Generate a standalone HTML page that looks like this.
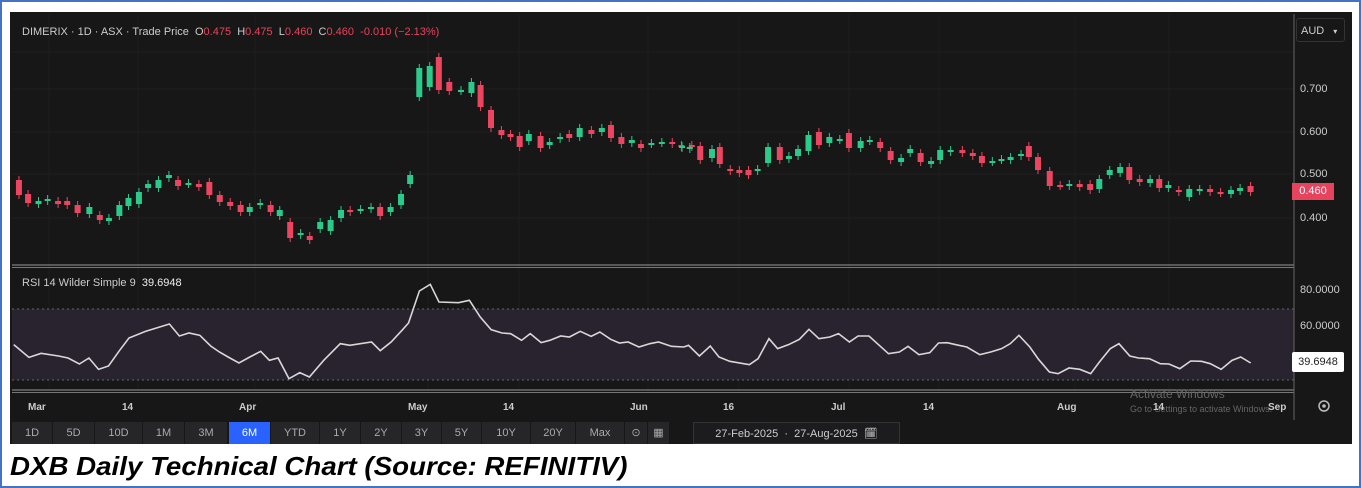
<!DOCTYPE html>
<html><head><meta charset="utf-8"><style>
body{margin:0;background:#fff;}
#w{position:relative;width:1357px;height:484px;border:2px solid #4472c4;overflow:hidden;font-family:"Liberation Sans",sans-serif;}
#c{position:absolute;left:8px;top:10px;width:1342px;height:432px;background:#171717;}
.t{position:absolute;white-space:nowrap;}
.btn{position:absolute;top:410px;height:22px;line-height:22px;text-align:center;font-size:11px;color:#aaa;background:#262629;border-right:1px solid #171717;box-sizing:border-box;}
#cap{position:absolute;left:8px;top:449px;font-weight:bold;font-style:italic;font-size:26px;color:#000;transform:scaleX(1.065);transform-origin:left top;white-space:nowrap;}
</style></head><body>
<div id="w">
<div id="c">
<svg id="s" width="1342" height="432" style="position:absolute;left:0;top:0"></svg>
<div class="t" style="left:12px;top:14px;font-size:11px;color:#ccc">DIMERIX · 1D · ASX · Trade Price &nbsp;O<span style="color:#e8435c">0.475</span> &nbsp;H<span style="color:#e8435c">0.475</span> &nbsp;L<span style="color:#e8435c">0.460</span> &nbsp;C<span style="color:#e8435c">0.460</span> &nbsp;<span style="color:#e8435c">-0.010 (−2.13%)</span></div>
<div class="t" style="left:1286px;top:6px;width:49px;height:24px;border:1px solid #333;border-radius:3px;font-size:11px;color:#ccc;line-height:24px;padding-left:4px;box-sizing:border-box">AUD <span style="font-size:8px;margin-left:6px">▾</span></div>
<div class="t" style="left:1290px;top:71px;font-size:11px;color:#ccc">0.700</div>
<div class="t" style="left:1290px;top:114px;font-size:11px;color:#ccc">0.600</div>
<div class="t" style="left:1290px;top:156px;font-size:11px;color:#ccc">0.500</div>
<div class="t" style="left:1290px;top:200px;font-size:11px;color:#ccc">0.400</div>
<div class="t" style="left:1282px;top:171px;width:42px;height:17px;background:#e8435c;color:#fff;font-size:11px;line-height:17px;text-align:center">0.460</div>
<div class="t" style="left:12px;top:265px;font-size:11px;color:#ccc">RSI 14 Wilder Simple 9 &nbsp;<span style="color:#eee">39.6948</span></div>
<div class="t" style="left:1290px;top:272px;font-size:11px;color:#ccc">80.0000</div>
<div class="t" style="left:1290px;top:308px;font-size:11px;color:#ccc">60.0000</div>
<div class="t" style="left:1282px;top:340px;width:52px;height:20px;background:#fff;color:#222;font-size:11px;line-height:20px;text-align:center;border-radius:2px">39.6948</div>
<div class="t" style="left:1120px;top:375px;font-size:12px;color:#666">Activate Windows</div>
<div class="t" style="left:1120px;top:392px;font-size:9px;color:#666">Go to Settings to activate Windows.</div>
<div class="t" style="left:18px;top:390px;font-size:10px;color:#ccc;font-weight:bold">Mar</div>
<div class="t" style="left:112px;top:390px;font-size:10px;color:#ccc;font-weight:bold">14</div>
<div class="t" style="left:229px;top:390px;font-size:10px;color:#ccc;font-weight:bold">Apr</div>
<div class="t" style="left:398px;top:390px;font-size:10px;color:#ccc;font-weight:bold">May</div>
<div class="t" style="left:493px;top:390px;font-size:10px;color:#ccc;font-weight:bold">14</div>
<div class="t" style="left:620px;top:390px;font-size:10px;color:#ccc;font-weight:bold">Jun</div>
<div class="t" style="left:713px;top:390px;font-size:10px;color:#ccc;font-weight:bold">16</div>
<div class="t" style="left:821px;top:390px;font-size:10px;color:#ccc;font-weight:bold">Jul</div>
<div class="t" style="left:913px;top:390px;font-size:10px;color:#ccc;font-weight:bold">14</div>
<div class="t" style="left:1047px;top:390px;font-size:10px;color:#ccc;font-weight:bold">Aug</div>
<div class="t" style="left:1143px;top:390px;font-size:10px;color:#ccc;font-weight:bold">14</div>
<div class="t" style="left:1258px;top:390px;font-size:10px;color:#ccc;font-weight:bold">Sep</div>
<div class="btn" style="left:2px;width:41px">1D</div>
<div class="btn" style="left:43px;width:42px">5D</div>
<div class="btn" style="left:85px;width:48px">10D</div>
<div class="btn" style="left:133px;width:42px">1M</div>
<div class="btn" style="left:175px;width:43px">3M</div>
<div class="btn" style="left:219px;width:42px;background:#2962ff;color:#fff">6M</div>
<div class="btn" style="left:261px;width:49px">YTD</div>
<div class="btn" style="left:310px;width:41px">1Y</div>
<div class="btn" style="left:351px;width:41px">2Y</div>
<div class="btn" style="left:392px;width:40px">3Y</div>
<div class="btn" style="left:432px;width:40px">5Y</div>
<div class="btn" style="left:472px;width:49px">10Y</div>
<div class="btn" style="left:521px;width:45px">20Y</div>
<div class="btn" style="left:566px;width:49px">Max</div>
<div class="btn" style="left:615px;width:23px">⊙</div>
<div class="btn" style="left:638px;width:22px">▦</div>
<div class="btn" style="left:683px;width:207px;background:#1c1c1e;border:1px solid #333;color:#ccc">27-Feb-2025 &nbsp;·&nbsp; 27-Aug-2025 &nbsp;🗓</div>
</div>
<div id="cap">DXB Daily Technical Chart (Source: REFINITIV)</div>
</div>
<script>
var s=document.getElementById('s'),ox=8,oy=10,h='';
function L(x1,y1,x2,y2,c,w,d){h+='<line x1="'+(x1-ox)+'" y1="'+(y1-oy)+'" x2="'+(x2-ox)+'" y2="'+(y2-oy)+'" stroke="'+c+'" stroke-width="'+w+'"'+(d?' stroke-dasharray="2,3"':'')+'/>';}
[87,130,172,216,50].forEach(function(y){L(10,y,1292,y,'#1f1f1f',1)});
[37,126,243,416,507,636,727,837,927,1063,1157].forEach(function(x){L(x+10,12,x+10,388,'#1e1e1e',1)});
h+='<rect x="2" y="'+(307-oy)+'" width="'+(1292-10)+'" height="71" fill="#29232f"/>';
L(10,307,1292,307,'#666',1,1);L(10,378,1292,378,'#666',1,1);
L(10,263,1292,263,'#999',1);L(10,265.5,1292,265.5,'#777',1);
L(10,388,1292,388,'#999',1);L(10,390.5,1292,390.5,'#777',1);
L(1292,12,1292,418,'#666',1);
var C=[[13,178,193,'r'],[20,192,201,'r'],[28,199,202,'g'],[35,197,199,'g'],[43,199,202,'r'],[50,199,203,'r'],[58,203,211,'r'],[67,205,212,'g'],[75,213,218,'r'],[82,216,219,'g'],[90,203,214,'g'],[97,196,204,'g'],[105,190,202,'g'],[112,182,186,'g'],[120,178,186,'g'],[128,173,176,'g'],[135,178,184,'r'],[143,181,182,'g'],[151,182,185,'r'],[159,180,193,'r'],[167,193,200,'r'],[175,200,204,'r'],[183,203,210,'r'],[190,205,210,'g'],[198,201,203,'g'],[206,203,210,'r'],[213,208,214,'g'],[221,220,236,'r'],[229,231,233,'g'],[236,234,238,'r'],[244,220,227,'g'],[252,218,229,'g'],[260,208,216,'g'],[267,208,210,'r'],[275,207,208,'g'],[283,205,207,'g'],[290,205,214,'r'],[298,205,210,'g'],[306,192,203,'g'],[313,173,182,'g'],[320,66,95,'g'],[328,64,85,'g'],[335,55,88,'r'],[343,80,89,'r'],[352,88,89,'g'],[360,80,91,'g'],[367,83,105,'r'],[375,108,126,'r'],[383,128,133,'r'],[390,132,135,'r'],[397,134,145,'r'],[404,132,139,'g'],[413,134,146,'r'],[420,140,143,'g'],[428,135,137,'g'],[435,132,136,'r'],[443,126,135,'g'],[452,128,132,'r'],[460,126,130,'g'],[467,123,136,'r'],[475,135,142,'r'],[483,138,141,'g'],[490,142,146,'r'],[498,141,142,'g'],[506,140,141,'g'],[514,140,142,'r'],[521,143,145,'r'],[529,143,145,'r'],
[680,144,146,'g'],[686,145,147,'g'],[694,144,158,'r'],[703,147,156,'g'],[709,145,162,'r'],[717,167,169,'r'],[724,168,171,'r'],[731,168,173,'r'],[738,167,169,'g'],[746,145,161,'g'],[755,145,158,'r'],[762,154,157,'g'],[769,147,154,'g'],[777,133,149,'g'],[785,130,143,'r'],[793,135,141,'g'],[801,137,138,'g'],[808,131,146,'r'],[817,139,146,'g'],[824,138,139,'g'],[832,140,146,'r'],[840,149,158,'r'],[848,156,160,'g'],[855,147,151,'g'],[863,151,160,'r'],[871,159,162,'g'],[878,148,158,'g'],[886,148,150,'g'],[895,148,151,'r'],[903,151,154,'r'],[910,154,161,'r'],[918,159,160,'g'],[925,157,158,'g'],[932,155,158,'g'],[940,152,154,'g'],[946,144,155,'r'],[953,155,168,'r'],[962,169,184,'r'],[970,183,184,'r'],[977,182,184,'g'],[985,182,185,'r'],[993,182,188,'r'],[1000,177,187,'g'],[1008,168,173,'g'],[1016,165,171,'g'],[1023,165,178,'r'],[1031,177,180,'r'],[1039,177,181,'g'],[1046,177,186,'r'],[1053,183,186,'g'],[1061,188,190,'r'],[1069,187,195,'g'],[1077,187,189,'g'],[1085,187,190,'r'],[1093,190,191,'r'],[1101,188,192,'g'],[1108,186,189,'g'],[1116,184,190,'r']];
C.forEach(function(c){var x=c[0]<600?c[0]*1.304:680+(c[0]-680)*1.304;var col=c[3]=='g'?'#2bc98a':'#ec4560';
L(x,c[1]-4,x,c[2]+4,col,1);h+='<rect x="'+(x-3-ox)+'" y="'+(c[1]-oy)+'" width="6" height="'+Math.max(2,c[2]-c[1])+'" fill="'+col+'"/>';});
var A=[[27,278],[62,316],[90,304],[130,312],[152,318],[178,336],[200,318],[222,352],[245,342],[270,296],[292,258],[330,238],[385,216],[408,252],[430,243],[455,250],[480,282],[500,300],[520,315],[545,333],[570,315],[595,298],[615,325],[635,318],[660,380],[685,362],[707,375],[740,325],[778,275],[800,280],[850,270],[870,296],[895,270],[920,235],[935,213],[960,117],[985,97],[1005,150],[1050,152],[1075,145],[1100,195],[1125,233],[1150,243],[1170,245],[1195,265],[1215,245],[1240,272],[1260,265],[1285,252],[1305,255],[1330,238],[1355,253],[1375,240],[1400,262],[1420,273],[1440,270],[1465,285],[1490,275],[1510,270],[1540,283],[1568,285]];
var B=[[15,280],[40,312],[65,282],[85,315],[110,328],[155,338],[175,320],[200,260],[220,290],[245,278],[270,262],[292,232],[315,260],[340,255],[360,245],[385,270],[405,252],[430,252],[475,305],[500,300],[520,283],[545,308],[570,302],[590,273],[610,272],[630,278],[655,285],[685,308],[710,300],[735,290],[755,275],[775,250],[800,285],[820,322],[845,360],[865,365],[890,348],[915,352],[940,365],[960,330],[985,290],[1005,275],[1030,312],[1050,318],[1075,320],[1100,335],[1120,336],[1145,350],[1170,327],[1195,328],[1215,335],[1240,352],[1265,325],[1285,315],[1308,333]];
var p=[];A.forEach(function(a){p.push((a[0]/2.3-ox)+','+(250+a[1]/3-oy))});B.forEach(function(a){p.push((680+a[0]/2.3-ox)+','+(250+a[1]/3-oy))});
h+='<polyline points="'+p.join(' ')+'" fill="none" stroke="#d8d8d8" stroke-width="1.6"/>';
h+='<circle cx="'+(1322-ox)+'" cy="'+(404-oy)+'" r="5" fill="none" stroke="#bbb" stroke-width="1.5"/><circle cx="'+(1322-ox)+'" cy="'+(404-oy)+'" r="1.8" fill="#bbb"/>';
s.innerHTML=h;
</script>
</body></html>
